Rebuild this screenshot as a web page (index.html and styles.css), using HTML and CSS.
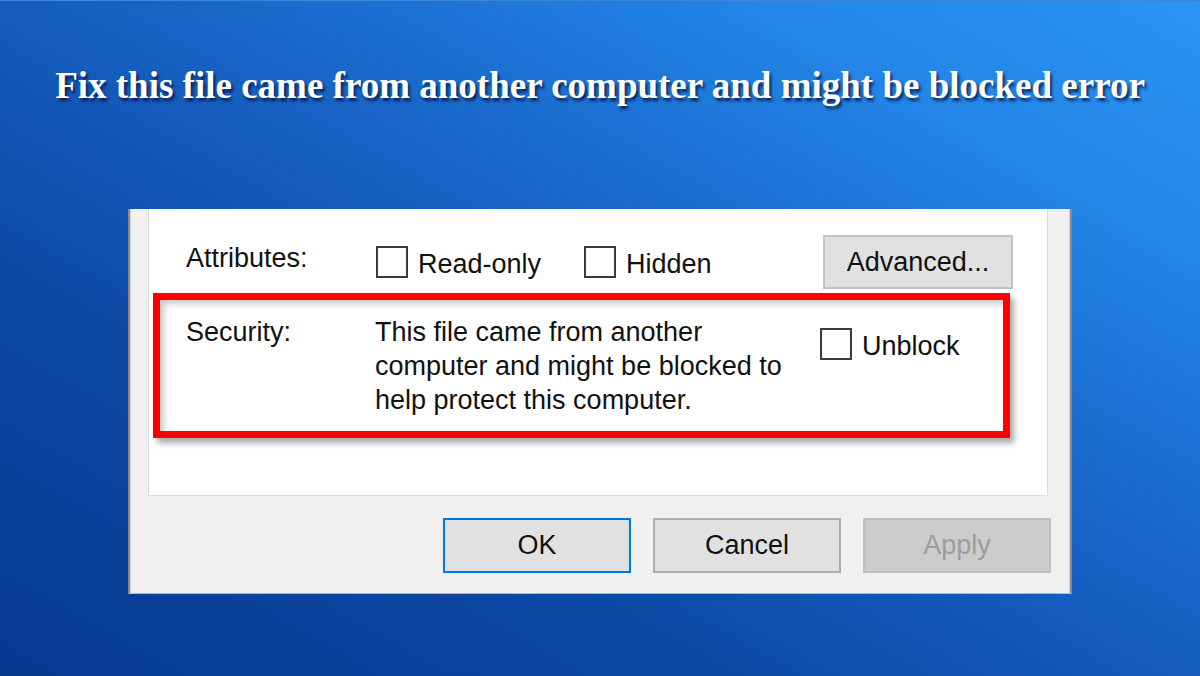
FILE: index.html
```html
<!DOCTYPE html>
<html lang="en">
<head>
<meta charset="utf-8">
<title>Fix this file came from another computer and might be blocked error</title>
<link rel="stylesheet" href="styles.css">
</head>
<body>
<main class="stage">
  <h1 class="headline">Fix this file came from another computer and might be blocked error</h1>
  <section class="dialog">
    <div class="panel">
      <div class="attr-row">
        <span class="field-label">Attributes:</span>
        <label class="check check-readonly"><span class="box"></span><span class="check-text">Read-only</span></label>
        <label class="check"><span class="box"></span><span class="check-text">Hidden</span></label>
        <button class="btn btn-advanced" type="button">Advanced...</button>
      </div>
      <div class="security">
        <span class="field-label">Security:</span>
        <p class="security-text">This file came from another<br>computer and might be blocked to<br>help protect this computer.</p>
        <label class="check check-unblock"><span class="box"></span><span class="check-text">Unblock</span></label>
      </div>
    </div>
    <div class="actions">
      <button class="btn btn-ok" type="button">OK</button>
      <button class="btn" type="button">Cancel</button>
      <button class="btn btn-disabled" type="button">Apply</button>
    </div>
  </section>
</main>
</body>
</html>
```
FILE: styles.css
```css
* { box-sizing: border-box; }

html, body {
  margin: 0;
  padding: 0;
  height: 676px;
  overflow: hidden;
}

body {
  background: linear-gradient(to top right, #073a8f 0%, #0c48a4 30%, #1762c4 55%, #2284e6 80%, #2b94f5 100%);
  font-family: "Liberation Sans", Arial, sans-serif;
}

.stage {
  height: 676px;
  padding-top: 67px;
  border-top: 1px solid #3f84d6;
}

.headline {
  margin: -1px 0 0 0;
  font-family: "Liberation Serif", "Times New Roman", serif;
  font-weight: bold;
  font-size: 37px;
  line-height: 37px;
  color: #ffffff;
  text-align: center;
  text-shadow: 2px 3px 3px rgba(0, 10, 50, 0.75);
}

.dialog {
  width: 944px;
  margin: 105px auto 0;
  background: #f0f0f0;
  border-left: 2px solid #8a8a8a;
  border-right: 2px solid #8a8a8a;
  border-bottom: 1px solid #b8b8b8;
  padding: 0 22px 20px 18px;
  box-shadow: inset 1px 0 0 #d0d0d0, inset -1px 0 0 #d0d0d0;
  font-size: 27px;
  color: #111;
}

.panel {
  background: #ffffff;
  border: 1px solid #dadada;
  border-top: none;
  padding: 26px 0 57px 4px;
}

.attr-row {
  display: flex;
  align-items: center;
  padding: 0 34px 0 33px;
  height: 54px;
}

.field-label {
  width: 190px;
  flex: none;
}

.attr-row .field-label {
  position: relative;
  top: -4px;
}

.check {
  display: flex;
  align-items: center;
  gap: 10px;
}

.check-readonly {
  width: 208px;
}

.box {
  width: 32px;
  height: 32px;
  border: 2px solid #3a3a3a;
  background: #fff;
  flex: none;
}

.check-text {
  position: relative;
  top: 2px;
}

.btn {
  width: 188px;
  height: 55px;
  background: #e1e1e1;
  border: 2px solid #adadad;
  font-family: "Liberation Sans", Arial, sans-serif;
  font-size: 27px;
  color: #111;
  padding: 0;
}

.btn-advanced {
  margin-left: auto;
  width: 190px;
  height: 54px;
  border-color: #c2c2c2;
}

.security {
  display: flex;
  align-items: flex-start;
  margin: 4px 37px 0 0;
  border: 7px solid #ff0000;
  padding: 15px 0 14px 26px;
  box-shadow: 4px 5px 6px rgba(0, 0, 0, 0.35), inset 4px 4px 6px rgba(0, 0, 0, 0.22);
}

.security .field-label {
  width: 189px;
  line-height: 34px;
}

.security-text {
  margin: 0;
  width: 445px;
  line-height: 34px;
}

.check-unblock {
  margin-top: 13px;
}

.actions {
  display: flex;
  justify-content: flex-end;
  gap: 22px;
  margin: 22px -3px 0 0;
}

.btn-ok {
  border-color: #0078d7;
  box-shadow: inset 0 0 0 1px #cfe3f5;
}

.btn-disabled {
  background: #cccccc;
  border-color: #bfbfbf;
  color: #9c9c9c;
}
```
